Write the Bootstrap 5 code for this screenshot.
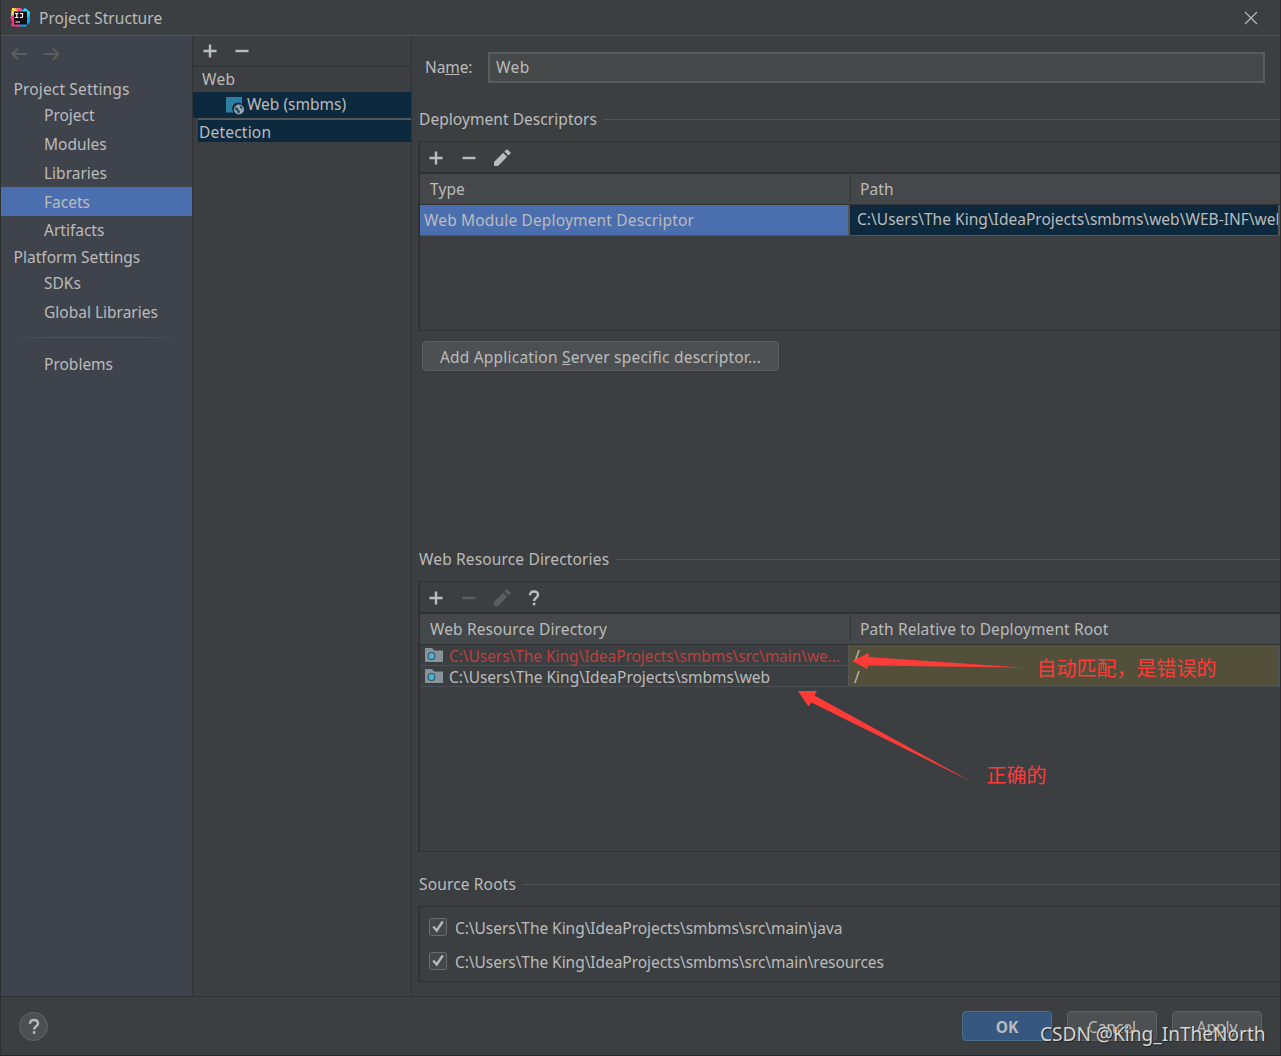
<!DOCTYPE html>
<html lang="en">
<head>
<meta charset="utf-8">
<title>Project Structure</title>
<link rel="stylesheet" href="https://cdn.jsdelivr.net/npm/bootstrap@5.3.0/dist/css/bootstrap.min.css">
<style>
html,body{height:100%;margin:0}
body{background:#3c3f41;color:#bbbbbb;font-family:"Noto Sans","Noto Sans CJK SC",sans-serif;font-size:15.5px;line-height:22px;overflow:hidden;white-space:nowrap}
svg{display:block;flex:none}
.window{width:1281px;height:1056px;border-left:1px solid #2f3031;border-right:1px solid #2b2b2b;border-bottom:1px solid #2b2426}
.titlebar{height:36px;border-bottom:1px solid #515355;padding:0 22px 0 8px;letter-spacing:.06px}
.workarea{height:961px;border-bottom:1px solid #323232}
.side{flex:none;width:192px;background:#3f434c;border-right:1px solid #323232}
.history{height:41px;padding:11px 0 0 10px;gap:17px}
.group-title{height:24px;line-height:24px;padding-left:12.5px;letter-spacing:.15px}
.group-title.wide-set{letter-spacing:.03px}
.side-item{height:29px;line-height:29px;padding-left:43px}
.side-item.short{height:28px}
.side-item.active{background:#4b6eaf;line-height:30px}
.side-sep{height:1px;margin:10px 12px 12px 12px;background:linear-gradient(90deg,transparent,#505355 20%,#505355 80%,transparent)}
.facets{flex:none;width:219px;border-right:1px solid #323232}
.facet-tools{height:31px;border-bottom:1px solid #323232;padding:0 0 0 9px;gap:16px}
.facet-root{height:25px;line-height:25px;padding-left:9px;letter-spacing:.3px}
.facet-sel{height:26px;background:#0d293e;padding:0 0 2px 33px;gap:3px}
.facet-detect{margin-left:5px;border-top:2px solid #555759;height:24px;line-height:25px;background:#0d293e;padding-left:1px;letter-spacing:.2px}
.editor{padding-left:7px;min-width:0}
.name-row{height:30px;margin:16px 15px 0 6px}
.name-label{width:63px;letter-spacing:-.1px}
.name-field{background:#45494a;border:2px solid #595c5d;height:31px;padding:0 6px;line-height:27px;letter-spacing:.4px}
.section-title{height:22px;gap:6px;letter-spacing:.06px}
.section-title.res{letter-spacing:.15px;gap:7px}
.section-title::after{content:"";flex:1;height:1px;background:#515355}
.panel{border:1px solid #323232;border-left-width:2px;border-right:0;margin-left:-1px}
.tools{height:30px;padding:2px 0 0 8px;gap:17px}
.thead-row{border-top:2px solid #323232;border-bottom:1px solid #323232;background:#45484a;height:33px;letter-spacing:.12px}
.th-a{flex:none;width:430px;padding:0 0 0 10px;line-height:30px}
.th-b{border-left:1px solid #35383a;margin:1px 0 2px;line-height:28px;padding-left:9px}
.cell-a{flex:none;width:430px;border-right:2px solid #515355}
.cell-b{min-width:0;border-right:2px solid #515355}
.desc-row{height:31px;border-bottom:1px solid #515355;line-height:30px}
.desc-type{background:#4b6eaf;padding-left:4px;letter-spacing:.16px}
.desc-path{background:#0d293e;padding-left:7px;letter-spacing:.02px;line-height:29px}
.dir-row{height:21px;border-bottom:1px solid #4b4e50;line-height:22px;letter-spacing:-.02px}
.dir-row .cell-a{padding-left:5px;gap:6px}
.dir-row .cell-b{background:#52503a;padding-left:4px;margin-bottom:-1px;border-bottom:1px solid #4b4e50}
.dir-row .missing{color:#bc3f3c;letter-spacing:-.06px}
.jb-btn{display:flex;align-items:center;justify-content:center;border:1px solid #5e6060;background:#4c5052;color:#bbb;border-radius:4px;height:30px;padding:2px 0 0;font-size:inherit;box-shadow:0 1px 1px #37393b}
.jb-btn.main{background:#365880;border-color:#4c708c;font-weight:700}
.w90{width:90px}
.add-desc{width:357px;margin:10px 0 0 3px;letter-spacing:.21px}
.check-row{height:34px;padding-left:9px;gap:8px;letter-spacing:-.05px}
.footer{height:58px;padding:0 18px}
.note{position:absolute;color:#ff3a38;font-family:"Noto Sans CJK SC",sans-serif;font-size:20px;line-height:24px}
.stamp{position:absolute;left:1040px;top:1020px;font-size:20px;line-height:28px;color:#d5d6d6;text-shadow:1px 1px 1px #222;transform:scaleX(.953);transform-origin:0 50%}
.arrows{position:absolute;left:790px;top:640px}
</style>
<script src="https://cdn.jsdelivr.net/npm/bootstrap@5.3.0/dist/js/bootstrap.bundle.min.js"></script>
</head>
<body class="position-relative">
<svg width="0" height="0" class="position-absolute">
<defs>
<g id="plus"><path d="M8 1.500v13M1.500 8h13" stroke="currentColor" stroke-width="2.400" fill="none"/></g>
<g id="minus"><path d="M1.500 8h13" stroke="currentColor" stroke-width="2.400" fill="none"/></g>
<g id="pencil"><path d="M1 17v-4L10.200 3.800l4 4L5 17zM11.400 2.600l1.900-1.900q.7-.6 1.400 0l2.600 2.600q.6.7 0 1.400l-1.900 1.900z" fill="currentColor"/></g>
<g id="ques"><path d="M2 5.200C2 2.600 3.600 1.400 6 1.400s4 1.300 4 3.500C10 7.800 6.100 7.800 6.100 11" stroke="currentColor" stroke-width="2.500" fill="none"/><rect x="4.800" y="12.700" width="2.600" height="2.600" fill="currentColor"/></g>
<g id="dir"><path d="M0 0h7l2 2.500h9V14H0z" fill="#87939a"/><circle cx="6.500" cy="8" r="3.900" fill="#3c4a52"/><circle cx="6.500" cy="8" r="2.900" fill="#40b6e0"/></g>
<g id="tick"><rect x=".5" y=".5" width="17" height="17" rx="2" fill="#43494a" stroke="#6b6b6b"/><path d="M4.200 8.500l3.500 4L13.800 3.500" stroke="#b5b7b8" stroke-width="2.400" fill="none"/></g>
</defs>
</svg>
<div class="window d-flex flex-column">
  <header class="titlebar d-flex align-items-center">
    <svg width="22" height="20" viewBox="0 0 22 20">
      <path d="M3 0h7l3 3-3 7-8-1z" fill="#f97a3d"/><path d="M3 0l3 0 3 4-7 4z" fill="#fcd05b"/><path d="M8 0h4l2 4H9z" fill="#ff4f9a"/><path d="M1 9l7-3 4 8-1 5-9-1 1-4z" fill="#ff318c"/><path d="M13 3l3-3 5 4v10l-5 5-6-1z" fill="#07a5f4"/><path d="M13 3l3-3 5 4-2 6z" fill="#20d5f5"/>
      <rect x="5" y="3.500" width="13" height="13" fill="#170c14"/><path d="M6 5.500h3.500M7.700 5.500v4M6 9.500h3.500M11 5.500h2.500v3q0 1-1 1H11M6.500 14H11" stroke="#fff" stroke-width="1.200" fill="none"/>
    </svg>
    <span class="ms-2 flex-grow-1">Project Structure</span>
    <svg width="14" height="14" viewBox="0 0 14 14"><path d="M1 1l12 12M13 1L1 13" stroke="#b4b6b7" stroke-width="1.200"/></svg>
  </header>
  <div class="workarea d-flex">
    <nav class="side">
      <div class="history d-flex">
        <svg width="16" height="14" viewBox="0 0 16 14"><path d="M16 7H1.500M7 1.500L1.500 7l5.500 5.500" stroke="#5d5e60" stroke-width="2" fill="none"/></svg>
        <svg width="16" height="14" viewBox="0 0 16 14"><path d="M0 7h14.500M9 1.500L14.500 7 9 12.500" stroke="#5d5e60" stroke-width="2" fill="none"/></svg>
      </div>
      <div class="group-title">Project Settings</div>
      <div class="side-item">Project</div>
      <div class="side-item">Modules</div>
      <div class="side-item short">Libraries</div>
      <div class="side-item active">Facets</div>
      <div class="side-item">Artifacts</div>
      <div class="group-title wide-set">Platform Settings</div>
      <div class="side-item">SDKs</div>
      <div class="side-item">Global Libraries</div>
      <div class="side-sep"></div>
      <div class="side-item">Problems</div>
    </nav>
    <section class="facets">
      <div class="facet-tools d-flex align-items-center">
        <svg width="16" height="16"><use href="#plus"/></svg><svg width="16" height="16"><use href="#minus"/></svg>
      </div>
      <div class="facet-root">Web</div>
      <div class="facet-sel d-flex align-items-center">
        <svg width="18" height="18" viewBox="0 0 18 18" class="mt-1"><path d="M0 0h16v7a5.500 5.500 0 0 0-8 8.500H0z" fill="#2a7fa3"/><circle cx="13" cy="12.500" r="5" fill="#9aa7b0"/><path d="M9.500 10l2.500 1 .5 2 1.500 1-.5 2.500-2-.5-.5-2-2-1.500zM13.500 8.500l2.500 1 .5 2.500-2-.5z" fill="#29475a"/></svg>
        <span>Web (smbms)</span>
      </div>
      <div class="facet-detect">Detection</div>
    </section>
    <main class="editor flex-grow-1">
      <div class="name-row d-flex align-items-center">
        <div class="name-label">Na<u>m</u>e:</div>
        <div class="name-field flex-grow-1">Web</div>
      </div>
      <div class="section-title d-flex align-items-center" style="margin-top:26px">Deployment Descriptors</div>
      <div class="panel" style="margin-top:11px;height:190px">
        <div class="tools d-flex align-items-center">
          <svg width="16" height="16"><use href="#plus"/></svg><svg width="16" height="16"><use href="#minus"/></svg>
          <svg width="18" height="18" style="margin-left:-1px"><use href="#pencil"/></svg>
        </div>
        <div class="thead-row d-flex"><div class="th-a">Type</div><div class="th-b flex-grow-1">Path</div></div>
        <div class="desc-row d-flex">
          <div class="cell-a desc-type">Web Module Deployment Descriptor</div>
          <div class="cell-b desc-path flex-grow-1 overflow-hidden">C:\Users\The King\IdeaProjects\smbms\web\WEB-INF\web</div>
        </div>
      </div>
      <button class="jb-btn add-desc"><span>Add Application <u>S</u>erver specific descriptor...</span></button>
      <div class="section-title res d-flex align-items-center" style="margin-top:177px">Web Resource Directories</div>
      <div class="panel" style="margin-top:11px;height:271px">
        <div class="tools d-flex align-items-center">
          <svg width="16" height="16"><use href="#plus"/></svg><svg width="16" height="16" color="#5c5e60"><use href="#minus"/></svg>
          <svg width="18" height="18" color="#5c5e60" style="margin-left:-1px"><use href="#pencil"/></svg>
          <svg width="12" height="16"><use href="#ques"/></svg>
        </div>
        <div class="thead-row d-flex"><div class="th-a">Web Resource Directory</div><div class="th-b flex-grow-1">Path Relative to Deployment Root</div></div>
        <div class="dir-row d-flex"><div class="cell-a d-flex missing"><svg width="18" height="16" style="margin-top:3px"><use href="#dir"/></svg><span>C:\Users\The King\IdeaProjects\smbms\src\main\we...</span></div><div class="cell-b flex-grow-1">/</div></div>
        <div class="dir-row d-flex"><div class="cell-a d-flex"><svg width="18" height="16" style="margin-top:3px"><use href="#dir"/></svg><span>C:\Users\The King\IdeaProjects\smbms\web</span></div><div class="cell-b flex-grow-1">/</div></div>
      </div>
      <div class="section-title res d-flex align-items-center" style="margin-top:21px">Source Roots</div>
      <div class="panel" style="margin-top:11px;height:76px;padding-top:4px">
        <div class="check-row d-flex align-items-center"><svg width="18" height="18" style="margin-top:-2px"><use href="#tick"/></svg><span>C:\Users\The King\IdeaProjects\smbms\src\main\java</span></div>
        <div class="check-row d-flex align-items-center"><svg width="18" height="18" style="margin-top:-2px"><use href="#tick"/></svg><span>C:\Users\The King\IdeaProjects\smbms\src\main\resources</span></div>
      </div>
    </main>
  </div>
  <footer class="footer d-flex align-items-center">
    <svg width="29" height="29" viewBox="0 0 29 29" class="me-auto"><circle cx="14.500" cy="14.500" r="14" fill="#4c5052" stroke="#626566"/><use href="#ques" x="9" y="6.500"/></svg>
    <div class="d-flex" style="gap:15px"><button class="jb-btn main w90">OK</button><button class="jb-btn w90">Cancel</button><button class="jb-btn w90">Apply</button></div>
  </footer>
</div>
<svg class="arrows" width="240" height="150" viewBox="790 640 240 150" fill="#ff3b38"><path d="M852 661l17-8-.5 4L1022 667.500 868 665.500l-.5 3.500zM798 691h19l-2.500 4.500L973 782.500 811.500 702.500l-3 4z"/></svg>
<div class="note" style="left:1036.5px;top:656px">自动匹配，是错误的</div>
<div class="note" style="left:986.5px;top:763px">正确的</div>
<div class="stamp">CSDN @King_InTheNorth</div>
</body>
</html>
